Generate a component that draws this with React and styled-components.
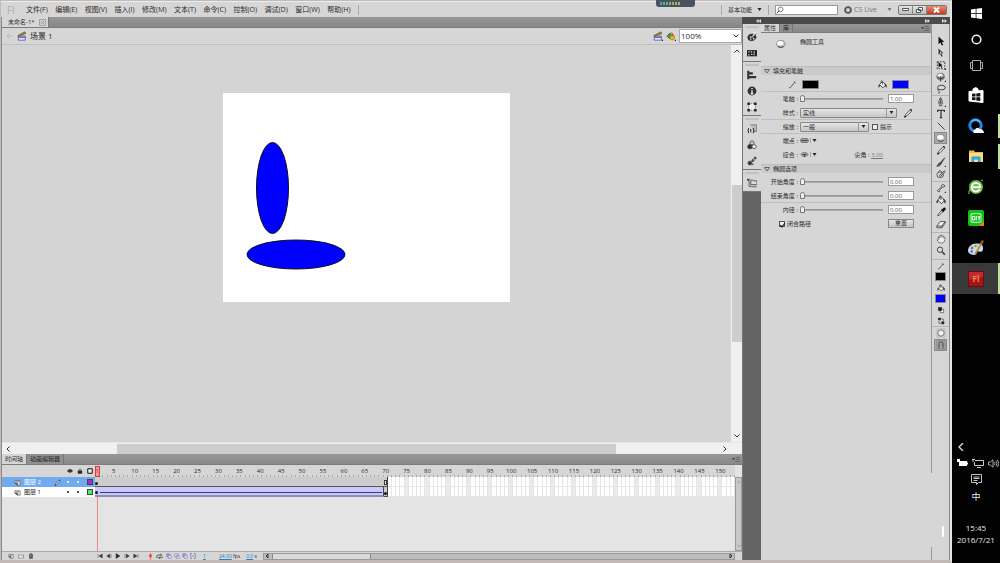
import React from 'react'
import styled, { createGlobalStyle } from 'styled-components'

const GlobalStyle = createGlobalStyle`
    * {
        box-sizing: border-box;
    }
    body {
        margin: 0;
        background: #000;
        font-family: 'Open Sans', 'Noto Sans CJK SC', sans-serif;
        font-size: 6px;
        line-height: 8px;
        color: #2b2b2b;
    }
    button, input, select {
        margin: 0;
        padding: 0;
        border: 0;
        background: none;
        font: inherit;
        color: inherit;
    }
    svg {
        display: block;
        flex: none;
    }
`

// ---------- icons ----------
const Icon = ({ size = 10, children }) => (
    <svg width={size} height={size} viewBox="0 0 12 12" fill="none" stroke="#444" strokeWidth="1">
        {children}
    </svg>
)

const Corner = () => <path d="M12 10v2h-2z" fill="#222" stroke="none" />

const Down = ({ color = '#222' }) => (
    <svg width="5" height="4" viewBox="0 0 5 4">
        <path d="M0.500 0h4L2.500 3z" fill={color} />
    </svg>
)

const ICONS = {
    select: <path d="M3 0.500v9.500l2.300-2.200L7 11.500l1.700-.8L7 7.200h3z" fill="#111" stroke="none" />,
    subselect: (
        <>
            <path d="M3 0.500v7.500l1.800-1.500L6.500 10.500l1.500-.6-1.500-3.600h2.500z" fill="#333" stroke="none" />
            <path d="M5 4v3l2-.6z" fill="#eee" stroke="none" />
        </>
    ),
    transform: (
        <>
            <path d="M1.500 2h9v8.500h-9z" strokeDasharray="2 1.300" strokeWidth="1.300" />
            <path d="M3 2.500v6.500l2-1.700 1.500 2.200 1-.6-1.200-2.300H8z" fill="#111" stroke="none" />
            <Corner />
        </>
    ),
    sphere: (
        <>
            <ellipse cx="5.500" cy="5.500" rx="4.600" ry="4.200" fill="#999" stroke="#777" />
            <ellipse cx="4.800" cy="4" rx="3" ry="2.200" fill="#eee" stroke="none" />
            <path d="M1.500 6.500q4 3 8.500 0M5.500 5v6.500" stroke="#333" />
            <Corner />
        </>
    ),
    lasso: (
        <>
            <ellipse cx="6.500" cy="4.300" rx="4.600" ry="2.800" strokeWidth="1.200" />
            <path d="M2.500 6q-1 1.500.5 2t.5 3.500" strokeWidth="1.200" />
        </>
    ),
    pen: (
        <>
            <path d="M5.500.5Q2.500 5 3.500 8.500h4Q8.500 5 5.500.5zM5.500 2v4M3.500 10.500h4" />
            <circle cx="5.500" cy="6.500" r=".7" fill="#222" />
            <Corner />
        </>
    ),
    type: <path d="M2 3.500V1.500h8v2M6 1.500v9M4.500 10.500h3" stroke="#222" strokeWidth="1.300" />,
    line: <path d="M2 2l8.500 8.500" strokeWidth="1.200" />,
    oval: (
        <>
            <ellipse cx="5.800" cy="6" rx="5" ry="4.200" fill="#c9c9c9" stroke="#888" />
            <ellipse cx="5" cy="5" rx="3.600" ry="2.500" fill="#fff" stroke="none" />
            <path d="M2.500 9q3.500 2.300 6.500-.2" stroke="#444" strokeWidth="1.200" />
        </>
    ),
    pencil: (
        <>
            <path d="M2 10.500l1.200-3L8.500 2l2 1.700-5.700 5.700z" fill="#ddd" />
            <path d="M8.700 1.500l2 1.600M1.500 11l2-1" stroke="#222" strokeWidth="1.500" />
        </>
    ),
    brush: (
        <>
            <path d="M10.500 1L5 7l1.200 1z" fill="#333" />
            <path d="M5 7q-2 0-2.500 2T.8 11q4 .5 5.400-3z" fill="#555" />
            <Corner />
        </>
    ),
    deco: (
        <>
            <ellipse cx="5" cy="7" rx="4" ry="3.400" />
            <path d="M3 4.500q0-2.500 2-2.500t1 2.500M4 8l6-6 1.200 1L5.500 9z" fill="#ccc" />
        </>
    ),
    bone: (
        <>
            <path d="M2.500 10.500l-1-1.300 1.300-1.400L7 4.500l-.3-2 1.500-1.200 1 1.300 1.500.6-1 1.600-1.800.2-3.800 3.500.2 1.700z" fill="#ddd" />
            <Corner />
        </>
    ),
    bucket: (
        <>
            <path d="M2 6l4-4 4.500 4.500-4 4z" fill="#eee" strokeWidth="1.200" />
            <path d="M4 4V1.500q1-1.500 2 0V6" />
            <path d="M2 6q-1.800 2-.8 3.500Q2.500 8.500 2 6z" fill="#111" />
            <path d="M9 5l2 1.700v3l-1-2z" fill="#111" />
        </>
    ),
    dropper: (
        <>
            <path d="M2 10.500l.7-2L7 4l1.500 1.500L4 10z" fill="#ddd" />
            <path d="M6.500 3l2.800 2.800M8 4l1-2q1.500-1.200 2 .3L8.800 5z" fill="#111" strokeWidth="1.500" stroke="#111" />
        </>
    ),
    eraser: (
        <>
            <path d="M1 8.500L5 3h6L7 8.500z" fill="#eee" />
            <path d="M1 8.500V10.500h6L11 5V3M7 8.500v2" />
        </>
    ),
    hand: (
        <path
            d="M3.500 10.500L1.500 7l.5-1.500 1.500 1-.8-3L4 3l.8 1.500L5 1.500l1.500 0 .5 2.500L8 2l1.200.5v2.300L10.500 4l.5 1.200-1.200 4-1.300 1.500z"
            fill="#eee"
            strokeDasharray="1.600 .6"
        />
    ),
    zoom: (
        <>
            <circle cx="4.800" cy="4.500" r="3.200" fill="#ddd" strokeWidth="1.200" />
            <path d="M7.300 7l3.500 3.500" strokeWidth="2" />
        </>
    ),
    stroke: <path d="M1.500 10.500q2 0 2.500-1.500L9 3M7.800 2l2.500 2" strokeWidth="1.200" />,
    blackWhite: (
        <>
            <path d="M5 5h5v5H5z" fill="#fff" />
            <path d="M2 2h5v5H2z" fill="#111" />
        </>
    ),
    swap: (
        <>
            <path d="M2 1.500h3.500v3H2zM7 7h3.500v3.500H7z" fill="#111" />
            <path d="M7 2.500q3 0 3 3M2.500 6.500q0 3.500 3 3.500" strokeWidth="1.300" />
        </>
    ),
    circleMode: (
        <>
            <path d="M1 1h10v10H1z" stroke="#bbb" fill="#ccc" />
            <circle cx="6" cy="6" r="3.800" fill="#eee" stroke="#666" />
        </>
    ),
    snap: (
        <>
            <path d="M1 1h10v10H1zM4 1v10M8 1v10M1 6h10" stroke="#888" />
            <path d="M3.500 10.500V5q0-2.500 2.500-2.500T8.500 5v5.500" stroke="#666" strokeWidth="1.500" />
        </>
    ),
    color: (
        <>
            <path d="M1 7q0-4.500 5.500-4.500Q11 3 11 6.500q-1 3.500-5.500 4Q1 10.500 1 7z" fill="#222" />
            <circle cx="4" cy="6" r="1" fill="#eee" stroke="none" />
            <circle cx="4.500" cy="8.500" r="1" fill="#eee" stroke="none" />
            <circle cx="8" cy="8" r="1" fill="#eee" stroke="none" />
            <path d="M5.500 6.500L11.500.5" stroke="#fff" strokeWidth="1.800" />
            <path d="M6 6.500l5.500-5" />
        </>
    ),
    swatches: (
        <>
            <path d="M0 2.500h12v7.500H0z" fill="#222" stroke="none" />
            <path d="M1.500 4h1.500v1.500H1.500zM4.500 4h1.500v1.500H4.500zM1.500 7.500H3V9H1.500zM5 7h1.500v1.500H5zM8 3.500h1v5.500H8z" fill="#ddd" stroke="none" />
        </>
    ),
    align: <path d="M1.500 1v10M2 4h5M2 8.500h9" strokeWidth="2.500" stroke="#333" />,
    info: (
        <>
            <circle cx="6" cy="6" r="5.300" fill="#333" stroke="none" />
            <path d="M6 2.500v1.500M6 5v4.500M4.500 9.500h3" stroke="#fff" strokeWidth="1.500" />
        </>
    ),
    transformPanel: (
        <>
            <path d="M2 2h8v8H2z" fill="#eee" stroke="#666" strokeDasharray="1.500 1" />
            <path d="M.5.5h3v3h-3zM8.500.5h3v3h-3zM.5 8.500h3v3h-3zM8.500 8.500h3v3h-3z" fill="#222" stroke="none" />
        </>
    ),
    code: (
        <>
            <path d="M4 1h7.500v8H8" fill="#bbb" stroke="#777" />
            <path d="M2 5Q.5 8 2 11M7.500 5Q9 8 7.500 11M4.500 6v4" stroke="#222" strokeWidth="1.200" />
        </>
    ),
    components: (
        <>
            <circle cx="6" cy="3.500" r="2.500" fill="#ccc" />
            <circle cx="3.500" cy="8" r="2.700" fill="#333" />
            <circle cx="8.500" cy="8" r="2.500" fill="#eee" />
        </>
    ),
    motion: (
        <>
            <circle cx="3.500" cy="8.500" r="2.300" fill="#333" />
            <circle cx="7" cy="5.500" r="1.300" fill="#555" />
            <circle cx="9.700" cy="2.500" r="1.300" fill="#555" />
            <circle cx="7" cy="10" r="1" fill="#555" stroke="none" />
        </>
    ),
    project: (
        <>
            <path d="M0 1.500h3L1.500 3.500z" fill="#222" />
            <path d="M2.500 3.500v6.500h3M4.500 2.500h2.500l1 1h4v4.500h-7.500zM5.500 10.500h6" fill="#ddd" />
        </>
    ),
    editScene: (
        <>
            <path d="M1.500 6h8.500v5H1.500z" fill="#e7e6fa" stroke="#5a57a8" />
            <path d="M1.500 7.500h8.500" stroke="#5a57a8" strokeWidth="1.500" />
            <path d="M1 5.500L9.500 1l1 2-8 3z" fill="#9b9421" stroke="#55531d" strokeWidth=".8" />
        </>
    ),
    editSymbols: (
        <>
            <path d="M1 6l4-3.500 2 4L4 9z" fill="#38a048" stroke="#2a6f35" />
            <path d="M6.500 1l4 5.500-3.500.5z" fill="#d43d22" stroke="none" />
            <circle cx="7.500" cy="8" r="2.700" fill="#efb11c" stroke="#ad6a10" strokeWidth=".7" />
        </>
    ),
    layer: (
        <>
            <path d="M1.500 3h9v7.500H6L1.500 7z" fill="#eee" />
            <path d="M1.500 7H6v3.500zM3.500 5h5" fill="#777" />
        </>
    ),
    eye: (
        <>
            <path d="M.5 6Q6-1 11.500 6 6 12 .5 6z" fill="#222" />
            <circle cx="6" cy="6" r="1.500" fill="#555" stroke="none" />
        </>
    ),
    lock: (
        <>
            <path d="M2 5.500h8V11H2z" fill="#222" />
            <path d="M3.800 5.500v-2Q6 0 8.200 3.500v2" strokeWidth="1.400" />
        </>
    ),
    box: <path d="M1.500 1.500h9v9h-9z" stroke="#111" strokeWidth="2" fill="#eee" />,
    folder: <path d="M1 3.500h3.500l1 1H11V10H1z" fill="#eee" stroke="#555" />,
    trash: <path d="M2 3.500h8M4.500 3V1.500h3V3M3 4l.5 7.500h5L9 4M5 5v5M7 5v5" stroke="#222" strokeWidth="1.300" />,
    first: <path d="M2 2v8M10.500 2v8L4 6z" fill="#333" />,
    prev: <path d="M10 2v8M7.500 2v8L1.500 6z" fill="#333" />,
    play: <path d="M2 1v10l8-5z" fill="#222" />,
    next: <path d="M2 2v8M4.500 2v8L10.500 6z" fill="#333" />,
    last: <path d="M10 2v8M1.500 2v8L8 6z" fill="#333" />,
    marker: <path d="M6 0v12M4.500 3h3v4h-3z" fill="#f33" stroke="#f33" />,
    loop: <path d="M3 8Q0 8 1 5.500t3-2h5M7.500 1.500L10 3.500 7.500 5.500M5 8h5q1.500 0 1-2M6.500 6.500L4.500 8l2 2" strokeWidth="1.400" />,
    onion: (
        <>
            <path d="M1.500 1.500h6v6h-6z" fill="#a7a4e0" stroke="#6360b0" />
            <path d="M4.500 4.500h6v6h-6z" fill="#e4e3fb" stroke="#6360b0" />
        </>
    ),
    onionLine: <path d="M1.500 1.500h6v6h-6zM4.500 4.500h6v6h-6z" fill="#eee" stroke="#6360b0" />,
    brackets: <path d="M4 1H1.500v10H4M8 1h2.500v10H8M6 4v4" stroke="#6360b0" strokeWidth="1.300" />,
    cap: (
        <>
            <path d="M2 3.500h8q3 2.500 0 5H2q-3-2.500 0-5z" fill="#aaa" stroke="#555" />
            <path d="M2 6h8" stroke="#222" />
        </>
    ),
    join: (
        <>
            <path d="M1 6Q6 0 11 6 6 12 1 6z" fill="#aaa" stroke="#666" />
            <path d="M3.500 6h5M6 6v3" stroke="#222" />
        </>
    ),
}

// ---------- page ----------
const Page = styled.div`
    display: flex;
    height: 100vh;
    overflow: hidden;
`

const Window = styled.div`
    flex: 1;
    min-width: 0;
    display: flex;
    flex-direction: column;
    background: #d6d6d6;
    border: solid #c3bab5;
    border-width: 1px 2px 3px 1px;
    border-right-color: #e8e4e1;
    position: relative;
`

const MenuBar = styled.header`
    height: 16px;
    flex: none;
    display: flex;
    align-items: center;
    padding: 0 3px 0 6px;
    font-size: 7px;
    border-top: 1px solid #ececec;
`

const Logo = styled.span`
    width: 19px;
    font-size: 10px;
    line-height: 12px;
    color: #b0b0b0;
`

const Menus = styled.nav`
    display: flex;
    justify-content: space-between;
    width: 333px;

    button {
        white-space: nowrap;
    }
`

const MenuTools = styled.div`
    display: flex;
    align-items: center;
    gap: 6px;
    margin-left: auto;
`

const Divider = styled.span`
    width: 1px;
    height: ${(p) => p.$height || 10}px;
    background: #a8a8a8;
`

const PlainButton = styled.button`
    display: flex;
    align-items: center;
    gap: ${(p) => (p.$dim ? 2 : 5)}px;
    font-size: ${(p) => (p.$dim ? 7 : 6)}px;
    margin-right: ${(p) => (p.$dim ? 4 : 0)}px;
    color: ${(p) => (p.$dim ? '#777' : 'inherit')};
`

const SearchBox = styled.label`
    display: flex;
    align-items: center;
    width: 63px;
    height: 10px;
    background: #fff;
    border: 1px solid #999;

    input {
        width: 50px;
    }
`

const WindowButtons = styled.div`
    display: flex;
    width: 49px;
    height: 10px;
    border: 1px solid #777;
    border-radius: 2px;
    overflow: hidden;
`

const WindowButton = styled.button`
    flex: ${(p) => (p.$close ? 3 : 2)};
    display: grid;
    place-items: center;
    background: ${(p) => (p.$close ? 'linear-gradient(#e58b78, #c8391d)' : 'linear-gradient(#e4e4e4, #bcbcbc)')};
    border-right: ${(p) => (p.$close ? 0 : '1px solid #888')};
`

const Recorder = styled.div`
    position: absolute;
    top: -1px;
    left: 69%;
    width: 39px;
    height: 7px;
    padding: 2px 4px;
    background: #4a5262;
    border-radius: 0 0 3px 3px;

    &::before {
        content: '';
        display: block;
        width: 20px;
        height: 3px;
        background: repeating-linear-gradient(90deg, transparent 0 2px, #4a5262 2px 3px),
            linear-gradient(90deg, #4ba9a5, #b9b64d);
    }
`

const Body = styled.div`
    flex: 1;
    display: flex;
    min-height: 0;
`

const Main = styled.main`
    flex: 1;
    min-width: 0;
    display: flex;
    flex-direction: column;
    border-left: 1px solid #8a8a8a;
`

// ---------- document ----------
const TabStrip = styled.div`
    height: ${(p) => p.$height || 11}px;
    flex: none;
    display: flex;
    align-items: stretch;
    background: linear-gradient(#979797, #888);
    border-bottom: 1px solid #7c7c7c;
`

const Tab = styled.button`
    display: flex;
    align-items: center;
    gap: 4px;
    padding: 0 3px;
    white-space: nowrap;
    color: ${(p) => (p.$active ? '#333' : '#222')};
    background: ${(p) => (p.$active ? '#d6d6d6' : '#8f8f8f')};
    border-right: 1px solid #777;
`

const DocTab = styled(Tab)`
    font-size: 6px;
    padding: 0 2px 0 6px;
`

const PanelMenu = styled.button`
    margin-left: auto;
    padding-right: 2px;
    display: grid;
    place-items: center;
`

const SceneBar = styled.div`
    height: 17px;
    flex: none;
    display: flex;
    align-items: center;
    gap: 3px;
    padding-left: 4px;
    font-size: 8px;
    border-bottom: 1px solid #c0c0c0;
`

const SceneName = styled.span`
    flex: 1;
`

const ZoomSelect = styled.span`
    display: flex;
    align-items: center;
    width: 63px;
    height: 14px;
    padding-right: 2px;
    background: #fff;
    border: 1px solid #aaa;

    select {
        appearance: none;
        flex: 1;
        padding-left: 1px;
        font-size: 8px;
    }
`

const Workspace = styled.div`
    flex: 1;
    min-height: 0;
    display: flex;
`

const Pasteboard = styled.div`
    flex: 1;
    display: flex;
    justify-content: center;
    align-items: flex-start;
    padding-top: 48px;
    background: #d4d4d4;
`

const Stage = styled.svg`
    width: 287px;
    height: 209px;
    background: #fff;
`

const VScroll = styled.div`
    width: 11px;
    display: flex;
    flex-direction: column;
    align-items: center;
    padding: 3px 0;
    background: #f0f0f0;
`

const VThumb = styled.div`
    width: 10px;
    margin-top: 131px;
    margin-bottom: auto;
    height: 157px;
    background: #cdcdcd;
`

const HScroll = styled.div`
    height: 12px;
    flex: none;
    display: flex;
    align-items: center;
    justify-content: space-between;
    padding: 0 14px 0 3px;
    background: #f0f0f0;
    border-top: 1px solid #e6e6e6;
`

const HThumb = styled.div`
    width: 69%;
    height: 10px;
    background: #cdcdcd;
`

// ---------- timeline ----------
const Timeline = styled.section`
    flex: none;
    display: flex;
    flex-direction: column;
    background: #e4e4e4;
`

const TimelineGrid = styled.div`
    display: grid;
    grid-template-columns: 93px 1fr 7px;
    grid-template-rows: 12px 10px 10px 54px;
`

const LayerHead = styled.div`
    grid-column: 1;
    display: flex;
    align-items: center;
    justify-content: flex-end;
    gap: 4px;
    padding-right: 2px;
    background: #d6d6d6;
`

const LayerRow = styled.div`
    grid-column: 1;
    display: flex;
    align-items: center;
    gap: 3px;
    padding: 0 2px 0 12px;
    color: ${(p) => (p.$active ? '#fff' : '#222')};
    background: ${(p) => (p.$active ? '#6fabee' : '#fff')};
`

const LayerName = styled.span`
    flex: 1;
`

const Dots = styled.span`
    display: flex;
    gap: 8px;
    margin: 0 5px 0 3px;

    i {
        width: 2px;
        height: 2px;
        border-radius: 1px;
        background: currentColor;
    }
`

const Outline = styled.span`
    width: 6px;
    height: 6px;
    border: 1px solid #444;
    background: ${(p) => p.$color};
`

const Frames = styled.div`
    grid-column: 2;
    display: grid;
    grid-template-columns: repeat(153, minmax(0, 1fr));
    min-width: 0;
    background: ${(p) => (p.$ruler ? '#d6d6d6' : '#fff')};
    position: relative;
`

const FrameLabel = styled.span`
    grid-row: 1;
    grid-column: ${(p) => p.$at};
    display: flex;
    justify-content: center;
    padding-top: 2px;
`

const Tick = styled.i`
    grid-row: 1;
    grid-column: ${(p) => p.$at};
    align-self: end;
    height: 2px;
    border-right: 1px solid #aaa;
`

const EmptyFrame = styled.i`
    grid-row: 1;
    grid-column: ${(p) => p.$at};
    border-right: 1px solid #e6e6e6;
    border-bottom: 1px solid #e6e6e6;
    background: ${(p) => (p.$at % 5 === 0 ? '#ebebeb' : '#fff')};
`

const Span = styled.div`
    grid-row: 1;
    grid-column: ${(p) => p.$from} / ${(p) => p.$to};
    display: flex;
    align-items: flex-end;
    padding-bottom: 1px;
    background: ${(p) => (p.$tween ? '#cbc8fd' : '#cdcdcd')};
    border-bottom: ${(p) => (p.$tween ? '2px solid #8f8cb8' : '1px solid #555')};
    border-right: ${(p) => (p.$open ? 0 : '1px solid #444')};
`

const KeyFrame = styled.i`
    width: 3px;
    height: 3px;
    border-radius: 2px;
    background: #111;
`

const EndFrame = styled.i`
    flex: none;
    width: 3px;
    height: 5px;
    border: 1px solid #333;
    background: #fff;
`

const TweenArrow = styled.i`
    flex: 1;
    height: 1px;
    margin: 0 1px 1px 2px;
    background: #3f3d66;
`

const Playhead = styled.div`
    position: absolute;
    left: 0;
    top: 1px;
    width: 5px;
    height: 11px;
    border: 1px solid #e33;
    background: rgba(255, 90, 90, 0.45);

    &::after {
        content: '';
        position: absolute;
        left: 1px;
        top: 10px;
        width: 1px;
        height: 74px;
        background: #e88;
    }
`

const TimelineScroll = styled.div`
    grid-column: 3;
    grid-row: 2 / 5;
    display: flex;
    flex-direction: column;
    align-items: center;
    justify-content: space-between;
    padding: 2px 0;
    background: #c8c8c8;
    border: 1px solid #999;
`

const TimelineFoot = styled.div`
    height: 9px;
    display: flex;
    align-items: center;
    background: #d6d6d6;
    border-top: 1px solid #aaa;
`

const FootGroup = styled.div`
    display: flex;
    align-items: center;
    gap: ${(p) => p.$gap || 2}px;
    width: ${(p) => p.$width}px;
    padding-left: ${(p) => p.$pad || 0}px;
`

const FrameInfo = styled.div`
    display: flex;
    gap: 6px;
    width: 67px;
    padding-left: 7px;
    font-size: 5px;
    white-space: nowrap;

    a {
        color: #2a7fc4;
    }
    > a {
        width: 10px;
    }
`

const FrameScroll = styled.div`
    flex: 1;
    display: flex;
    align-items: center;
    height: 7px;
    margin-right: 7px;
    background: #bdbdbd;
    border: 1px solid #999;
`

const FrameThumb = styled.div`
    width: 21%;
    height: 5px;
    margin: 0 auto 0 2px;
    background: #dadada;
    border: solid #888;
    border-width: 0 1px;
`

// ---------- dock ----------
const Dock = styled.aside`
    flex: none;
    width: 208px;
    display: flex;
    flex-direction: column;
`

const DockHead = styled.div`
    height: 7px;
    flex: none;
    display: grid;
    grid-template-columns: 19px 1fr 17px;
    align-items: center;
    justify-items: end;
    padding-right: 3px;
    background: #4a4a4a;
`

const DockBody = styled.div`
    flex: 1;
    display: flex;
    min-height: 0;
`

const IconStrip = styled.div`
    width: 19px;
    background: #646464;
    border-left: 1px solid #777;
`

const StripGroup = styled.div`
    display: flex;
    flex-direction: column;
    align-items: center;
    padding-top: 5px;
    background: #d6d6d6;
    border-bottom: 1px solid #777;
    position: relative;

    &::before {
        content: '';
        position: absolute;
        top: 2px;
        left: 2px;
        right: 2px;
        height: 2px;
        background: #c2c2c2;
    }
`

const StripButton = styled.button`
    height: 16px;
    display: grid;
    place-items: center;
`

const Panel = styled.section`
    flex: 1;
    min-width: 0;
`

const PanelTitle = styled.div`
    display: flex;
    align-items: flex-start;
    gap: 14px;
    height: 31px;
    padding: 5px 0 0 15px;

    svg {
        margin-top: 1px;
    }
`

const SectionHead = styled.button`
    width: 100%;
    height: 9px;
    display: flex;
    align-items: center;
    gap: 3px;
    margin: 2px 0;
    padding-left: 3px;
    background: #cacaca;
    border-top: 1px solid #bdbdbd;
`

const Row = styled.div`
    height: ${(p) => (p.$tall ? 15 : 14)}px;
    display: flex;
    align-items: center;
    padding-right: 17px;
    border-bottom: 1px solid ${(p) => (p.$line ? '#bfbfbf' : 'transparent')};
`

const RowLabel = styled.label`
    width: 37px;
    margin-right: 2px;
    text-align: right;
    white-space: nowrap;
`

const Slider = styled.input`
    appearance: none;
    width: 83px;
    height: 8px;
    background: linear-gradient(#8d8d8d, #b5b5b5) center / 100% 2px no-repeat;

    &::-webkit-slider-thumb {
        appearance: none;
        width: 5px;
        height: 7px;
        border: 1px solid #777;
        border-radius: 3px 3px 0 0;
        background: #eee;
    }
`

const NumberBox = styled.input`
    width: 26px;
    height: 9px;
    margin-left: auto;
    padding-left: 1px;
    color: #555;
    background: #fff;
    border: 1px solid #999;
`

const SelectBox = styled.span`
    display: flex;
    align-items: center;
    width: ${(p) => p.$width}px;
    height: 10px;
    padding-right: 2px;
    border: 1px solid #888;
    border-radius: 1px;
    background: linear-gradient(#e6e6e6, #c6c6c6);

    select {
        appearance: none;
        flex: 1;
        height: 8px;
        padding-left: 2px;
        border-right: 1px solid #999;
        margin-right: 2px;
    }
`

const EditStroke = styled.button`
    margin-left: 6px;
`

const CheckLabel = styled.label`
    display: flex;
    align-items: center;
    gap: 2px;
    margin-left: ${(p) => p.$left}px;

    input {
        appearance: none;
        width: 6px;
        height: 6px;
        border: 1px solid #555;
        background: #eee;
    }
    input:checked::after {
        content: '';
        display: block;
        width: 2px;
        height: 4px;
        margin-left: 1px;
        border: solid #111;
        border-width: 0 1px 1px 0;
        transform: rotate(40deg);
    }
`

const Swatch = styled.button`
    width: ${(p) => p.$width || 17}px;
    height: 9px;
    background: ${(p) => p.$color};
    border: 1px solid #888;
`

const SwatchRow = styled(Row)`
    justify-content: space-between;
    padding: 0 22px 0 27px;
`

const SwatchPair = styled.span`
    display: flex;
    align-items: center;
    gap: 5px;
`

const Picker = styled.button`
    display: flex;
    align-items: center;
    gap: 1px;
`

const Miter = styled.span`
    margin-left: auto;
    padding-right: 31px;

    a {
        color: #777;
    }
`

const ResetButton = styled.button`
    width: 26px;
    height: 9px;
    margin-left: auto;
    line-height: 7px;
    border: 1px solid #888;
    background: linear-gradient(#e6e6e6, #c4c4c4);
`

const ToolEdge = styled.div`
    width: 1px;
    display: flex;
    flex-direction: column;
    gap: 74px;

    i:first-child {
        flex: 1;
        background: #999;
    }
    i:last-child {
        height: 13px;
        background: #999;
    }
`

const Tools = styled.div`
    width: 18px;
    display: flex;
    flex-direction: column;
    border-right: 1px solid #8a8a8a;
    padding-top: 11px;
`

const ToolGroup = styled.div`
    display: flex;
    flex-direction: column;
    align-items: center;
    padding-bottom: ${(p) => p.$pad || 0}px;
    border-bottom: 1px solid #b5b5b5;

    &:last-of-type {
        border-bottom: 0;
    }
`

const ToolButton = styled.button`
    width: 13px;
    height: ${(p) => (p.$small ? 11 : 12)}px;
    display: grid;
    place-items: center;
    background: ${(p) => (p.$active ? '#a9a9a9' : 'none')};
    outline: ${(p) => (p.$active ? '1px solid #8a8a8a' : 'none')};
    outline-offset: -1px;
`

const Nub = styled.i`
    width: 2px;
    height: 11px;
    margin: auto 5px 23px auto;
    border-radius: 1px;
    background: #fff;
`

// ---------- taskbar ----------
const Taskbar = styled.nav`
    width: 48px;
    flex: none;
    display: flex;
    flex-direction: column;
    align-items: stretch;
    color: #e8e8e8;
    background: #020202;
`

const TaskButton = styled.button`
    height: 26px;
    display: grid;
    place-items: center;
`

const Apps = styled.div`
    display: flex;
    flex-direction: column;
    height: 214px;
    margin-top: 2px;
`

const AppButton = styled.button`
    flex: 1;
    display: grid;
    place-items: center;
    background: ${(p) => (p.$active ? '#393939' : 'none')};
    position: relative;

    &::after {
        content: '';
        display: ${(p) => (p.$open ? 'block' : 'none')};
        position: absolute;
        right: 0;
        top: ${(p) => (p.$active ? 0 : 3)}px;
        bottom: ${(p) => (p.$active ? 0 : 3)}px;
        width: 2px;
        background: #c0df9c;
    }
`

const Tray = styled.div`
    margin-top: auto;
    display: flex;
    flex-direction: column;
    align-items: center;
    font-size: 8px;
    line-height: 12px;
    text-align: center;
    padding-bottom: 17px;
`

const TrayRow = styled.div`
    width: 100%;
    height: 16px;
    display: flex;
    align-items: center;
    justify-content: ${(p) => (p.$start ? 'flex-start' : 'center')};
    gap: 4px;
    padding-left: ${(p) => (p.$start ? 5 : 0)}px;
`

const Language = styled.button`
    height: 20px;
    margin-bottom: 15px;
    font-size: 9px;
`

const MENUS = ['文件(F)', '编辑(E)', '视图(V)', '插入(I)', '修改(M)', '文本(T)', '命令(C)', '控制(O)', '调试(D)', '窗口(W)', '帮助(H)']

const STRIP = [
    ['color', 'swatches'],
    ['align', 'info', 'transformPanel'],
    ['code', 'components', 'motion'],
    ['project'],
]

const TOOLS = [
    { tools: ['select', 'subselect', 'transform', 'sphere', 'lasso'] },
    { tools: ['pen', 'type', 'line', 'oval', 'pencil', 'brush', 'deco'], pad: 1 },
    { tools: ['bone', 'bucket', 'dropper', 'eraser'], pad: 2 },
    { tools: ['hand', 'zoom'], pad: 2 },
]

const FRAME_COUNT = 153
const frames = Array.from({ length: FRAME_COUNT }, (_, i) => i + 1)
const labels = frames.filter((n) => n === 1 || n % 5 === 0)

const APPS = [
    {
        name: 'Store',
        art: (
            <>
                <path d="M1 4.500l14-1v12L1 14zM5 4V2q3-3 5 0v2" fill="#fff" stroke="#fff" />
                <path d="M4 6.800l3.500-.3v3H4zM8.300 6.400l4-.4v3.500h-4zM4 10.300h3.500v3L4 13zM8.300 10.300h4v3.600l-4-.5z" fill="#111" />
            </>
        ),
    },
    {
        name: 'QQ',
        open: true,
        art: (
            <>
                <circle cx="7.500" cy="7.500" r="5.700" fill="none" stroke="#2386e8" strokeWidth="3" />
                <path d="M3 3.500Q7.500 0 12 4" fill="none" stroke="#54b7f5" strokeWidth="1.500" />
                <path d="M6 15q-2-2 1-3.500Q9 8.500 11.500 11q4 0 4.500 4z" fill="#fff" />
            </>
        ),
    },
    {
        name: 'Explorer',
        open: true,
        art: (
            <>
                <path d="M1 2.500h5l1 1.500h8v10H1z" fill="#e8b84a" />
                <path d="M1 5h14v9H1z" fill="#fbdc83" />
                <path d="M3.500 14V8.500h9V14H10v-2.500H6V14z" fill="#2ca6dd" />
            </>
        ),
    },
    {
        name: 'Browser',
        art: (
            <>
                <circle cx="8" cy="8" r="7" fill="#69b842" />
                <path d="M12 10.500Q10 12.500 8 12.500A4.300 4.300 0 1 1 12.300 8.200H5" fill="none" stroke="#fff" strokeWidth="2" />
                <path d="M1 15Q0 12 3 9M13 2l2-1" stroke="#83cc55" fill="none" />
            </>
        ),
    },
    {
        name: 'iQIYI',
        art: (
            <>
                <rect width="16" height="16" rx="2" fill="#12c119" />
                <path d="M3 4q5-1 10 0v8q-5 1-10 0z" fill="none" stroke="#fff" strokeWidth=".8" />
                <path d="M4.300 6.500h2.500v3.500H4.300zM8.300 6v4.500M10 6l1 2 1-2M11 8v2.500" fill="none" stroke="#fff" />
                <path d="M16 11v5h-5z" fill="#f47b28" />
            </>
        ),
    },
    {
        name: 'Paint',
        art: (
            <>
                <path d="M0 10Q1 4 8 3.500t7 4.500-4 3.500-3.500 3.500Q-.5 15 0 10z" fill="#c1dff0" />
                <circle cx="4" cy="8" r="1.400" fill="#dd513b" />
                <circle cx="7.500" cy="6" r="1.300" fill="#6fae3f" />
                <circle cx="3.700" cy="11.500" r="1.300" fill="#3c74c8" />
                <circle cx="10.500" cy="7.500" r="1.300" fill="#f2c84b" />
                <path d="M7 14.500L14.500 1.500" stroke="#c78441" strokeWidth="1.800" />
                <path d="M12.500 3l1.500-3 2 1-1.500 3z" fill="#8d5630" />
            </>
        ),
    },
    {
        name: 'Flash',
        open: true,
        active: true,
        art: (
            <>
                <rect x=".5" y=".5" width="15" height="15" fill="#a3151c" stroke="#6e0c10" />
                <path d="M1 1h14v5L1 9z" fill="#c02b2a" />
                <text x="8" y="11" textAnchor="middle" fontSize="8" fontWeight="bold" fill="#f08a40">
                    Fl
                </text>
            </>
        ),
    },
]

const Chevron = ({ d, size = 6, color = '#333' }) => (
    <svg width={size} height={size} viewBox="0 0 6 6">
        <path d={d} fill="none" stroke={color} />
    </svg>
)

const DoubleArrow = ({ left }) => (
    <svg width="5" height="4" viewBox="0 0 5 4">
        <path d={left ? 'M2.500 0v4L0 2zM5 0v4L2.500 2z' : 'M0 0v4l2.500-2zM2.500 0v4L5 2z'} fill="#ddd" />
    </svg>
)

const MenuLines = () => (
    <svg width="8" height="5" viewBox="0 0 8 5">
        <path d="M0 1h3L1.500 3z" fill="#333" />
        <path d="M3.500 .5H8M3.500 2.500H8M3.500 4.500H8" stroke="#666" />
    </svg>
)

const SliderRow = ({ id, label, value, line }) => (
    <Row $line={line}>
        <RowLabel htmlFor={id}>{label} :</RowLabel>
        <Slider id={id} type="range" min="0" max="100" defaultValue="0" />
        <NumberBox aria-label={label} defaultValue={value} />
    </Row>
)

const Properties = () => (
    <Panel>
        <TabStrip $height={9}>
            <Tab $active>属性</Tab>
            <Tab>库</Tab>
            <PanelMenu aria-label="Panel menu">
                <MenuLines />
            </PanelMenu>
        </TabStrip>
        <PanelTitle>
            <Icon>{ICONS.oval}</Icon>
            <span>椭圆工具</span>
        </PanelTitle>
        <SectionHead>
            <Chevron d="M.5 1.500h5L3 5z" color="#666" />
            填充和笔触
        </SectionHead>
        <SwatchRow $tall $line>
            <SwatchPair>
                <Icon size={9}>{ICONS.stroke}</Icon>
                <Swatch $color="#000" aria-label="Stroke color" />
            </SwatchPair>
            <SwatchPair>
                <Icon size={9}>{ICONS.bucket}</Icon>
                <Swatch $color="#00f" aria-label="Fill color" />
            </SwatchPair>
        </SwatchRow>
        <SliderRow id="stroke" label="笔触" value="1.00" />
        <Row $line>
            <RowLabel htmlFor="style">样式 :</RowLabel>
            <SelectBox $width={97}>
                <select id="style">
                    <option>实线</option>
                </select>
                <Down />
            </SelectBox>
            <EditStroke aria-label="Edit stroke style">
                <Icon>{ICONS.pencil}</Icon>
            </EditStroke>
        </Row>
        <Row $line>
            <RowLabel htmlFor="scale">缩放 :</RowLabel>
            <SelectBox $width={69}>
                <select id="scale">
                    <option>一般</option>
                </select>
                <Down />
            </SelectBox>
            <CheckLabel $left={3}>
                <input type="checkbox" />
                提示
            </CheckLabel>
        </Row>
        <Row>
            <RowLabel as="span">端点 :</RowLabel>
            <Picker aria-label="端点">
                <Icon size={9}>{ICONS.cap}</Icon>
                <Divider $height={5} />
                <Down />
            </Picker>
        </Row>
        <Row>
            <RowLabel as="span">接合 :</RowLabel>
            <Picker aria-label="接合">
                <Icon size={9}>{ICONS.join}</Icon>
                <Divider $height={5} />
                <Down />
            </Picker>
            <Miter>
                尖角 : <a href="#miter">3.00</a>
            </Miter>
        </Row>
        <SectionHead>
            <Chevron d="M.5 1.500h5L3 5z" color="#666" />
            椭圆选项
        </SectionHead>
        <SliderRow id="start" label="开始角度" value="0.00" />
        <SliderRow id="end" label="结束角度" value="0.00" line />
        <SliderRow id="inner" label="内径" value="0.00" />
        <Row>
            <CheckLabel $left={18}>
                <input type="checkbox" defaultChecked />
                闭合路径
            </CheckLabel>
            <ResetButton>重置</ResetButton>
        </Row>
    </Panel>
)

const TimelinePanel = () => (
    <Timeline>
        <TabStrip>
            <Tab $active>时间轴</Tab>
            <Tab>动画编辑器</Tab>
            <PanelMenu aria-label="Timeline menu">
                <MenuLines />
            </PanelMenu>
        </TabStrip>
        <TimelineGrid>
            <LayerHead>
                <Icon size={6}>{ICONS.eye}</Icon>
                <Icon size={6}>{ICONS.lock}</Icon>
                <Icon size={6}>{ICONS.box}</Icon>
            </LayerHead>
            <Frames $ruler>
                <Playhead />
                {frames.map((n) => (
                    <Tick key={n} $at={n} />
                ))}
                {labels.map((n) => (
                    <FrameLabel key={n} $at={n}>
                        {n}
                    </FrameLabel>
                ))}
            </Frames>
            <LayerRow $active>
                <Icon size={7}>{ICONS.layer}</Icon>
                <LayerName>图层 2</LayerName>
                <Icon size={7}>{ICONS.pencil}</Icon>
                <Dots>
                    <i />
                    <i />
                </Dots>
                <Outline $color="#9a30d0" />
            </LayerRow>
            <Frames>
                <Span $from={1} $to={70} $open>
                    <KeyFrame />
                </Span>
                <Span $from={70} $to={71}>
                    <EndFrame />
                </Span>
                {frames.slice(70).map((n) => (
                    <EmptyFrame key={n} $at={n} />
                ))}
            </Frames>
            <LayerRow>
                <Icon size={7}>{ICONS.layer}</Icon>
                <LayerName>图层 1</LayerName>
                <Dots>
                    <i />
                    <i />
                </Dots>
                <Outline $color="#4df04d" />
            </LayerRow>
            <Frames>
                <Span $from={1} $to={70} $tween>
                    <KeyFrame />
                    <TweenArrow />
                </Span>
                <Span $from={70} $to={71}>
                    <KeyFrame />
                </Span>
                {frames.slice(70).map((n) => (
                    <EmptyFrame key={n} $at={n} />
                ))}
            </Frames>
            <TimelineScroll>
                <Chevron d="M1 4l2-2 2 2" size={4} color="#777" />
                <Chevron d="M1 2l2 2 2-2" size={4} color="#777" />
            </TimelineScroll>
        </TimelineGrid>
        <TimelineFoot>
            <FootGroup $width={95} $pad={6} $gap={4}>
                {['layer', 'folder', 'trash'].map((name) => (
                    <button key={name} aria-label={name}>
                        <Icon size={6}>{ICONS[name]}</Icon>
                    </button>
                ))}
            </FootGroup>
            <FootGroup $width={50} $gap={3}>
                {['first', 'prev', 'play', 'next', 'last'].map((name) => (
                    <button key={name} aria-label={name}>
                        <Icon size={6}>{ICONS[name]}</Icon>
                    </button>
                ))}
            </FootGroup>
            <FootGroup $width={18}>
                {['marker', 'loop'].map((name) => (
                    <button key={name} aria-label={name}>
                        <Icon size={7}>{ICONS[name]}</Icon>
                    </button>
                ))}
            </FootGroup>
            <FootGroup $width={31} $pad={1}>
                {['onion', 'onionLine', 'onion', 'brackets'].map((name, i) => (
                    <button key={i} aria-label={name}>
                        <Icon size={6}>{ICONS[name]}</Icon>
                    </button>
                ))}
            </FootGroup>
            <FrameInfo>
                <a href="#frame">1</a>
                <span>
                    <a href="#fps">24.00</a> fps
                </span>
                <span>
                    <a href="#time">0.0</a> s
                </span>
            </FrameInfo>
            <FrameScroll>
                <Chevron d="M4 1L2 3l2 2z" />
                <FrameThumb />
                <Chevron d="M2 1l2 2-2 2z" />
            </FrameScroll>
        </TimelineFoot>
    </Timeline>
)

const ToolPanel = () => (
    <Tools>
        {TOOLS.map((group, i) => (
            <ToolGroup key={i} $pad={group.pad}>
                {group.tools.map((name) => (
                    <ToolButton key={name} $active={name === 'oval'} aria-label={name}>
                        <Icon>{ICONS[name]}</Icon>
                    </ToolButton>
                ))}
            </ToolGroup>
        ))}
        <ToolGroup>
            <ToolButton $small aria-label="Stroke">
                <Icon size={8}>{ICONS.stroke}</Icon>
            </ToolButton>
            <ToolButton as="div" $small>
                <Swatch $width={11} $color="#000" aria-label="Stroke color" />
            </ToolButton>
            <ToolButton $small aria-label="Fill">
                <Icon size={8}>{ICONS.bucket}</Icon>
            </ToolButton>
            <ToolButton as="div" $small>
                <Swatch $width={11} $color="#00f" aria-label="Fill color" />
            </ToolButton>
            <ToolButton $small aria-label="Black and white">
                <Icon size={8}>{ICONS.blackWhite}</Icon>
            </ToolButton>
            <ToolButton $small aria-label="Swap colors">
                <Icon size={8}>{ICONS.swap}</Icon>
            </ToolButton>
        </ToolGroup>
        <ToolGroup>
            <ToolButton aria-label="Object drawing">
                <Icon>{ICONS.circleMode}</Icon>
            </ToolButton>
            <ToolButton $active aria-label="Snap to objects">
                <Icon>{ICONS.snap}</Icon>
            </ToolButton>
        </ToolGroup>
        <Nub />
    </Tools>
)

const SystemBar = () => (
    <Taskbar>
        <TaskButton aria-label="Start">
            <svg width="11" height="11" viewBox="0 0 11 11">
                <path d="M0 1.500L4.700.8v4.400H0zM5.400.7L11 0v5.200H5.400zM0 5.900h4.700v4.400L0 9.600zM5.400 5.900H11V11l-5.600-.7z" fill="#fff" />
            </svg>
        </TaskButton>
        <TaskButton aria-label="Cortana">
            <svg width="11" height="11" viewBox="0 0 11 11">
                <circle cx="5.500" cy="5.500" r="4.300" fill="none" stroke="#eee" strokeWidth="1.600" />
            </svg>
        </TaskButton>
        <TaskButton aria-label="Task view">
            <svg width="13" height="11" viewBox="0 0 13 11">
                <path d="M2.500.5h8v10h-8zM2 2.500H.5v6H2M11 2.500h1.500v6H11" fill="none" stroke="#aaa" />
            </svg>
        </TaskButton>
        <Apps>
            {APPS.map((app) => (
                <AppButton key={app.name} $open={app.open} $active={app.active} aria-label={app.name}>
                    <svg width="16" height="16" viewBox="0 0 16 16">
                        {app.art}
                    </svg>
                </AppButton>
            ))}
        </Apps>
        <Tray>
            <TrayRow $start>
                <Chevron d="M4.500 0L1.500 3l3 3" size={8} color="#ddd" />
            </TrayRow>
            <TrayRow $start>
                <svg width="11" height="8" viewBox="0 0 11 8">
                    <path d="M2 2h8v5H2zM10 3.500h1v2h-1zM0 0h3v3H0z" fill="#fff" />
                </svg>
                <svg width="12" height="9" viewBox="0 0 12 9">
                    <path d="M3 1.500h8.500v5H2.500V3M5 8.500h4M0 .5h3M1 0v3" fill="none" stroke="#ccc" />
                </svg>
                <svg width="11" height="9" viewBox="0 0 11 9">
                    <path d="M.5 3h2L5 .8v7.400L2.500 6h-2zM6.500 3q1 1.500 0 3M8 1.800q2 2.700 0 5.400M9.500 .8q2.500 3.700 0 7.400" fill="none" stroke="#ccc" strokeWidth=".8" />
                </svg>
            </TrayRow>
            <TrayRow>
                <svg width="11" height="11" viewBox="0 0 11 11">
                    <path d="M.5.5h10v8h-3l-2 2v-2h-5zM2.500 3h6M2.500 4.500h6M2.500 6.500h4" fill="none" stroke="#ddd" strokeWidth=".9" />
                </svg>
            </TrayRow>
            <Language>中</Language>
            <time>
                15:45
                <br />
                2016/7/21
            </time>
        </Tray>
    </Taskbar>
)

export default function App() {
    return (
        <Page>
            <GlobalStyle />
            <Window>
                <MenuBar>
                    <Logo>Fl</Logo>
                    <Menus>
                        {MENUS.map((name) => (
                            <button key={name}>{name}</button>
                        ))}
                        <Divider />
                    </Menus>
                    <MenuTools>
                        <Divider />
                        <PlainButton>
                            基本功能
                            <Down />
                        </PlainButton>
                        <Divider />
                        <SearchBox aria-label="Search">
                            <Icon size={8}>
                                <circle cx="7" cy="5" r="3.500" />
                                <path d="M4.500 7.500L1 11" strokeWidth="1.500" />
                            </Icon>
                            <input type="text" />
                        </SearchBox>
                        <PlainButton $dim>
                            <Icon size={8}>
                                <circle cx="6" cy="6" r="4.300" strokeWidth="2.800" stroke="#555" />
                            </Icon>
                            CS Live
                        </PlainButton>
                        <PlainButton aria-label="CS Live menu">
                            <Down color="#777" />
                        </PlainButton>
                        <WindowButtons>
                            <WindowButton aria-label="Minimize">
                                <svg width="7" height="3" viewBox="0 0 7 3">
                                    <path d="M.5.5h6v2h-6z" fill="#fff" stroke="#555" />
                                </svg>
                            </WindowButton>
                            <WindowButton aria-label="Restore">
                                <svg width="7" height="6" viewBox="0 0 7 6">
                                    <path d="M2.500.5h4v3h-4zM.5 2.500h4v3h-4z" fill="#fff" stroke="#555" />
                                </svg>
                            </WindowButton>
                            <WindowButton $close aria-label="Close">
                                <svg width="7" height="6" viewBox="0 0 7 6">
                                    <path d="M1 .5l5 5M6 .5l-5 5" stroke="#fff" strokeWidth="2" />
                                </svg>
                            </WindowButton>
                        </WindowButtons>
                    </MenuTools>
                </MenuBar>
                <Recorder />
                <Body>
                    <Main>
                        <TabStrip>
                            <DocTab $active>
                                未命名-1*
                                <Icon size={7}>
                                    <path d="M1 1h10v10H1zM3.500 3.500l5 5M8.500 3.500l-5 5" stroke="#777" />
                                </Icon>
                            </DocTab>
                        </TabStrip>
                        <SceneBar>
                            <Icon size={8}>
                                <path d="M11 6H1.500M5 2.500L1.500 6 5 9.500" stroke="#bbb" strokeWidth="1.500" />
                            </Icon>
                            <Icon>{ICONS.editScene}</Icon>
                            <SceneName>场景 1</SceneName>
                            <button aria-label="Edit scene">
                                <Icon>
                                    {ICONS.editScene}
                                    <Corner />
                                </Icon>
                            </button>
                            <button aria-label="Edit symbols">
                                <Icon>
                                    {ICONS.editSymbols}
                                    <Corner />
                                </Icon>
                            </button>
                            <ZoomSelect>
                                <select aria-label="Zoom">
                                    <option>100%</option>
                                </select>
                                <Chevron d="M.5 1.500L3 4l2.500-2.500" />
                            </ZoomSelect>
                        </SceneBar>
                        <Workspace>
                            <Pasteboard>
                                <Stage viewBox="0 0 287 209">
                                    <ellipse cx="49.500" cy="95" rx="16" ry="45.500" fill="#00f" stroke="#111" />
                                    <ellipse cx="73" cy="161.500" rx="49" ry="14.500" fill="#00f" stroke="#111" />
                                </Stage>
                            </Pasteboard>
                            <VScroll>
                                <Chevron d="M.5 4.500L3 2l2.500 2.500" />
                                <VThumb />
                                <Chevron d="M.5 1.500L3 4l2.500-2.500" />
                            </VScroll>
                        </Workspace>
                        <HScroll>
                            <Chevron d="M4.500 .5L2 3l2.500 2.500" />
                            <HThumb />
                            <Chevron d="M1.500 .5L4 3 1.500 5.500" />
                        </HScroll>
                        <TimelinePanel />
                    </Main>
                    <Dock>
                        <DockHead>
                            <DoubleArrow left />
                            <DoubleArrow />
                            <DoubleArrow />
                        </DockHead>
                        <DockBody>
                            <IconStrip>
                                {STRIP.map((group, i) => (
                                    <StripGroup key={i}>
                                        {group.map((name) => (
                                            <StripButton key={name} aria-label={name}>
                                                <Icon>{ICONS[name]}</Icon>
                                            </StripButton>
                                        ))}
                                    </StripGroup>
                                ))}
                            </IconStrip>
                            <Properties />
                            <ToolEdge>
                                <i />
                                <i />
                            </ToolEdge>
                            <ToolPanel />
                        </DockBody>
                    </Dock>
                </Body>
            </Window>
            <SystemBar />
        </Page>
    )
}
